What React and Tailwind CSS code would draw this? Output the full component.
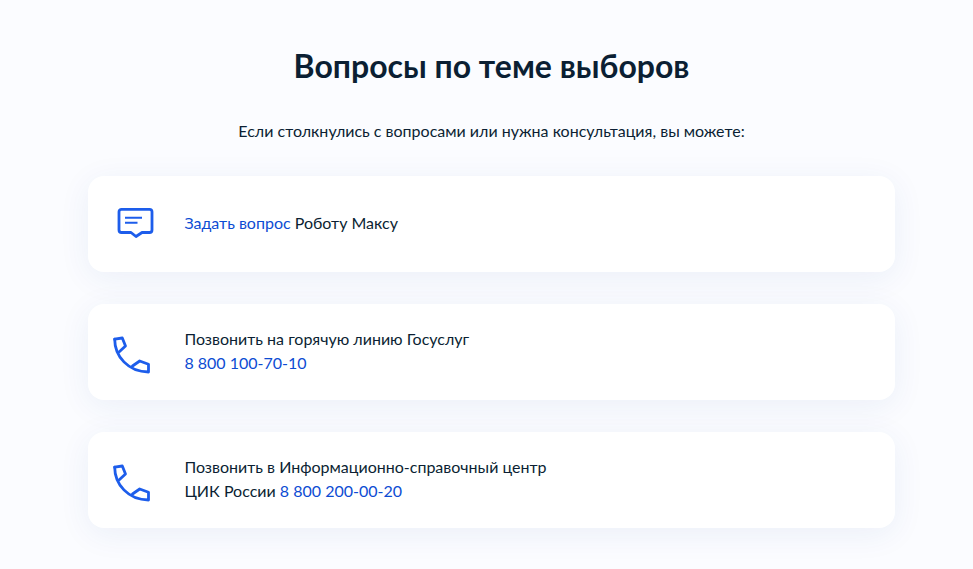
export default function App() {
  const Phone = () => (
    <svg width="48" height="48" viewBox="0 0 48 48" fill="none" stroke="#1d5deb" strokeWidth="2.800" strokeLinejoin="round" strokeLinecap="round">
      <path d="M6.700 11.200 L14.300 10 L17.500 18 L11 24" />
      <path d="M6.700 11.200 C6.700 28 20 44 40.500 44 L40.500 36.300 L31.700 33 L24.500 38" />
    </svg>
  );
  const card = "bg-white rounded-2xl h-24 flex items-center shadow-[0_6px_32px_rgba(30,70,160,0.07)]";
  const text = "text-base leading-6 pb-[2px] pl-[0.4px]";
  return (
    <div className="w-[973px] h-[569px] overflow-hidden bg-[#fbfcff] font-['Lato',sans-serif] text-[#0b1f33]">
      <div className="ml-[88px] w-[807px]">
        <h1 className="pt-[46px] text-center text-[32px] leading-10 font-bold">Вопросы по теме выборов</h1>
        <p className="mt-[33px] mb-[33px] text-center text-base leading-6">Если столкнулись с вопросами или нужна консультация, вы можете:</p>
        <div className="flex flex-col gap-8">
          <div className={card}>
            <div className="w-24 pl-6 shrink-0">
              <svg width="48" height="48" viewBox="0 0 48 48" fill="none" stroke="#1d5deb" strokeWidth="2.800" strokeLinejoin="round" strokeLinecap="round">
                <path d="M9.500 9.300 H37.500 A2.500 2.500 0 0 1 40 11.800 V30 A2.500 2.500 0 0 1 37.500 32.500 H30 L24 36.500 L19 32.500 H9.500 A2.500 2.500 0 0 1 7 30 V11.800 A2.500 2.500 0 0 1 9.500 9.300 Z" />
                <path d="M13 17.700 H30 M13 22.700 H25.500" strokeWidth="2" strokeLinecap="butt" />
              </svg>
            </div>
            <p className={text}><span className="text-[#0d4cd3]">Задать вопрос</span> Роботу Максу</p>
          </div>
          <div className={card}>
            <div className="w-24 pl-5 shrink-0"><Phone /></div>
            <p className={text}>Позвонить на горячую линию Госуслуг<br /><span className="text-[#0d4cd3]">8 800 100-70-10</span></p>
          </div>
          <div className={card}>
            <div className="w-24 pl-5 shrink-0"><Phone /></div>
            <p className={text}>Позвонить в Информационно-справочный центр<br />ЦИК России <span className="text-[#0d4cd3]">8 800 200-00-20</span></p>
          </div>
        </div>
      </div>
    </div>
  );
}
